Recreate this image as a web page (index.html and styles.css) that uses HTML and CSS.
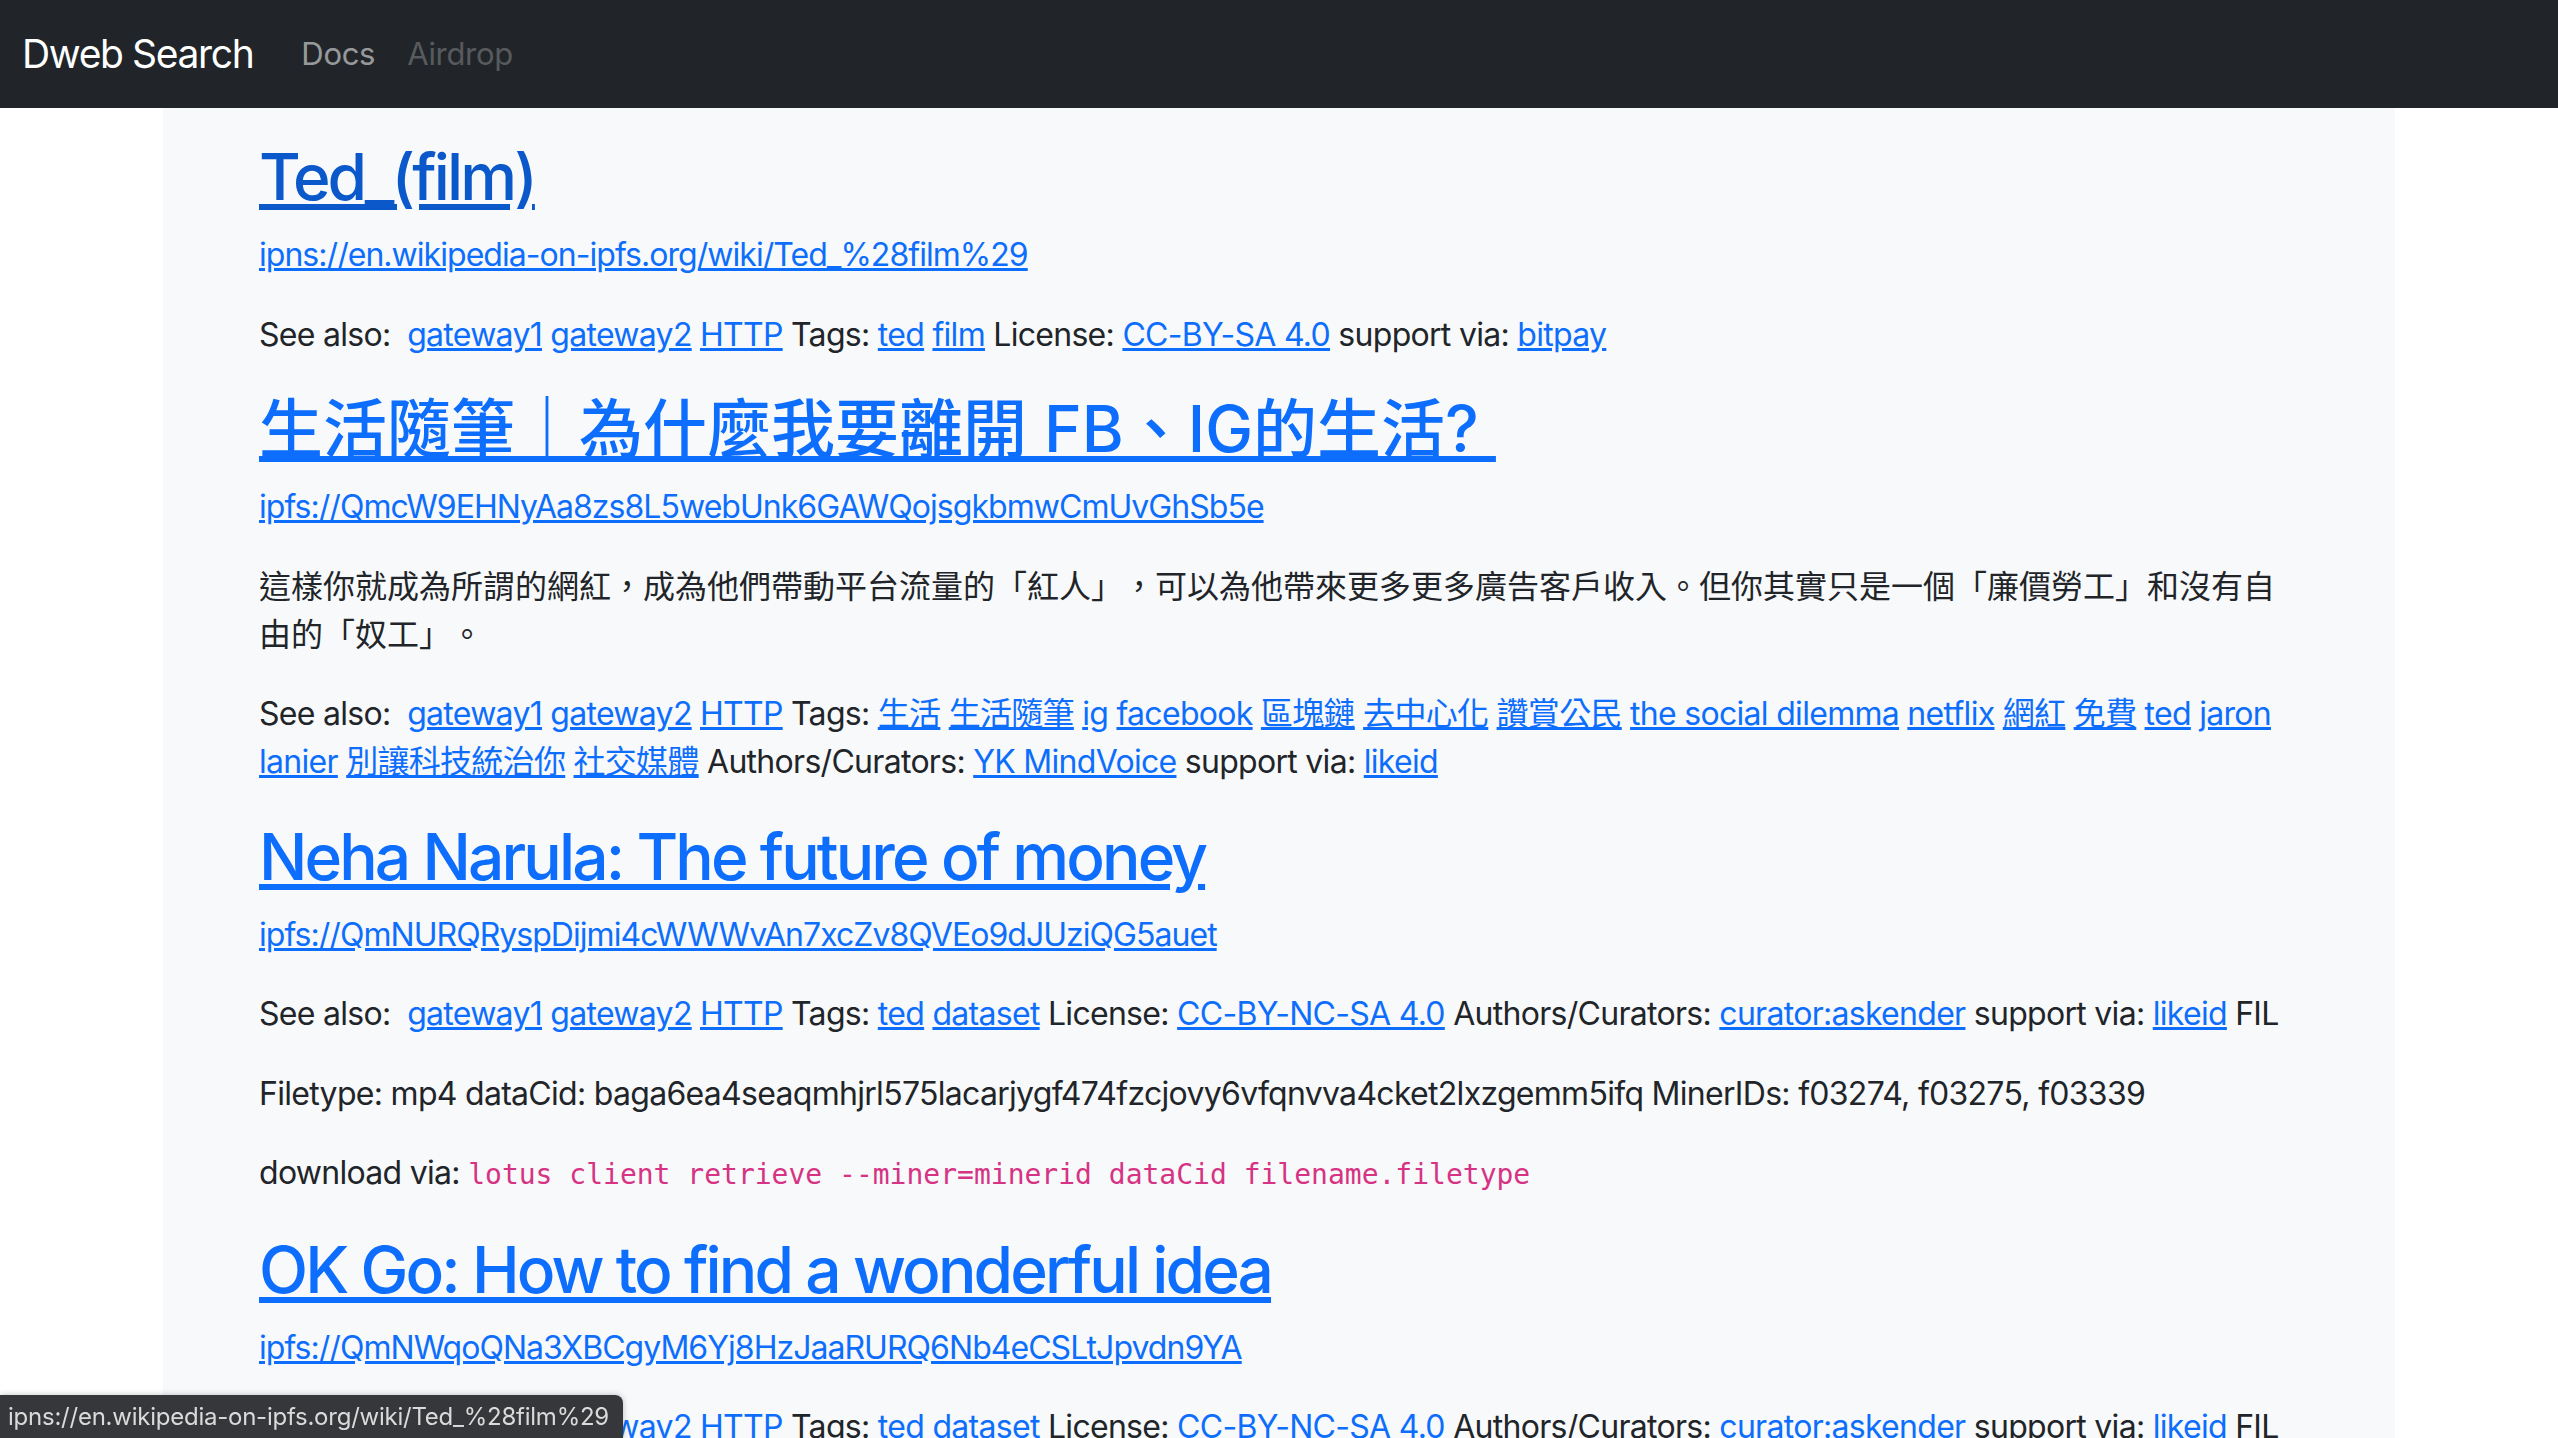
FILE: index.html
```html
<!DOCTYPE html>
<html lang="zh-Hant">
<head>
<meta charset="utf-8">
<title>Dweb Search</title>
<link rel="stylesheet" href="styles.css">
</head>
<body>
<nav class="navbar">
  <a class="brand" href="#">Dweb Search</a>
  <ul class="nav-links">
    <li><a class="nav-link" href="#">Docs</a></li>
    <li><a class="nav-link disabled" href="#">Airdrop</a></li>
  </ul>
</nav>

<main class="container">
  <article class="result">
    <h2 class="title"><a class="hovered" href="#">Ted_(film)</a></h2>
    <p><a class="url" href="#">ipns://en.wikipedia-on-ipfs.org/wiki/Ted_%28film%29</a></p>
    <p>See also:&nbsp; <a href="#">gateway1</a> <a href="#">gateway2</a> <a href="#">HTTP</a> Tags: <a href="#">ted</a> <a href="#">film</a> License: <a href="#">CC-BY-SA 4.0</a> support via: <a href="#">bitpay</a></p>
  </article>

  <article class="result">
    <h2 class="title title-cjk"><a href="#">生活隨筆｜為什麼我要離開 FB、IG的生活?&nbsp;</a></h2>
    <p><a class="url" href="#">ipfs://QmcW9EHNyAa8zs8L5webUnk6GAWQojsgkbmwCmUvGhSb5e</a></p>
    <p class="cjk">這樣你就成為所謂的網紅，成為他們帶動平台流量的「紅人」，可以為他帶來更多更多廣告客戶收入。但你其實只是一個「廉價勞工」和沒有自由的「奴工」。</p>
    <p>See also:&nbsp; <a href="#">gateway1</a> <a href="#">gateway2</a> <a href="#">HTTP</a> Tags: <a href="#">生活</a> <a href="#">生活隨筆</a> <a href="#">ig</a> <a href="#">facebook</a> <a href="#">區塊鏈</a> <a href="#">去中心化</a> <a href="#">讚賞公民</a> <a href="#">the social dilemma</a> <a href="#">netflix</a> <a href="#">網紅</a> <a href="#">免費</a> <a href="#">ted</a> <a href="#">jaron lanier</a> <a href="#">別讓科技統治你</a> <a href="#">社交媒體</a> Authors/Curators: <a href="#">YK MindVoice</a> support via: <a href="#">likeid</a></p>
  </article>

  <article class="result">
    <h2 class="title"><a href="#">Neha Narula: The future of money</a></h2>
    <p><a class="url" href="#">ipfs://QmNURQRyspDijmi4cWWWvAn7xcZv8QVEo9dJUziQG5auet</a></p>
    <p>See also:&nbsp; <a href="#">gateway1</a> <a href="#">gateway2</a> <a href="#">HTTP</a> Tags: <a href="#">ted</a> <a href="#">dataset</a> License: <a href="#">CC-BY-NC-SA 4.0</a> Authors/Curators: <a href="#">curator:askender</a> support via: <a href="#">likeid</a> FIL</p>
    <p>Filetype: mp4 dataCid: baga6ea4seaqmhjrl575lacarjygf474fzcjovy6vfqnvva4cket2lxzgemm5ifq MinerIDs: f03274, f03275, f03339</p>
    <p>download via: <code>lotus client retrieve --miner=minerid dataCid filename.filetype</code></p>
  </article>

  <article class="result">
    <h2 class="title"><a href="#">OK Go: How to find a wonderful idea</a></h2>
    <p><a class="url" href="#">ipfs://QmNWqoQNa3XBCgyM6Yj8HzJaaRURQ6Nb4eCSLtJpvdn9YA</a></p>
    <p>See also:&nbsp; <a href="#">gateway1</a> <a href="#">gateway2</a> <a href="#">HTTP</a> Tags: <a href="#">ted</a> <a href="#">dataset</a> License: <a href="#">CC-BY-NC-SA 4.0</a> Authors/Curators: <a href="#">curator:askender</a> support via: <a href="#">likeid</a> FIL</p>
    <p>Filetype: mp4 dataCid: baga6ea4seaqmhjrl575lacarjygf474fzcjovy6vfqnvva4cket2lxzgemm5ifq MinerIDs: f03274, f03275, f03339</p>
  </article>
</main>

<div class="status-bubble">ipns://en.wikipedia-on-ipfs.org/wiki/Ted_%28film%29</div>
</body>
</html>
```

FILE: styles.css
```css
* { box-sizing: border-box; }

html, body {
  margin: 0;
  padding: 0;
}

body {
  font-family: Inter, "Noto Sans CJK TC", sans-serif;
  font-size: 32px;
  line-height: 48px;
  letter-spacing: -0.022em;
  color: #212529;
  background: #ffffff;
  text-spacing-trim: space-all;
}

a {
  color: #0d6efd;
  text-decoration: underline;
}

.navbar {
  height: 108px;
  background: #212529;
  display: flex;
  align-items: center;
  padding: 0 22px;
}

.brand {
  color: #ffffff;
  text-decoration: none;
  font-size: 39px;
  line-height: 58px;
  letter-spacing: -0.035em;
  margin-right: 48px;
}

.nav-links {
  list-style: none;
  display: flex;
  margin: 0;
  padding: 0;
}

.nav-link {
  color: rgba(255, 255, 255, 0.55);
  text-decoration: none;
  font-size: 31px;
  letter-spacing: -0.01em;
  padding: 0 16px;
}

.nav-links li:first-child .nav-link {
  padding-left: 0;
}

.nav-link.disabled {
  color: rgba(255, 255, 255, 0.25);
}

.container {
  width: 2232px;
  margin: 0 auto;
  background: #f8f9fa;
  padding: 30px 96px 40px;
  min-height: 1330px;
}

.result p {
  margin: 0 0 31.5px;
}

.result p.cjk {
  letter-spacing: 0;
}

.url {
  letter-spacing: -0.03em;
}

.title {
  font-size: 64px;
  line-height: 77px;
  font-weight: 500;
  letter-spacing: -0.045em;
  margin: 0 0 16px;
}

.title.title-cjk {
  letter-spacing: 0;
}

.title a.hovered {
  color: #0a58ca;
}

code {
  font-family: "DejaVu Sans Mono", monospace;
  font-size: 28px;
  letter-spacing: 0;
  color: #d63384;
}

.status-bubble {
  position: fixed;
  left: 0;
  bottom: 0;
  width: 623px;
  height: 43px;
  background: #36373a;
  color: #dadada;
  font-family: Inter, sans-serif;
  font-size: 24px;
  letter-spacing: -0.01em;
  line-height: 43px;
  padding: 0 8px;
  border-top-right-radius: 8px;
  white-space: nowrap;
  overflow: hidden;
  box-shadow: 0 0 6px rgba(0,0,0,0.25);
}
```
